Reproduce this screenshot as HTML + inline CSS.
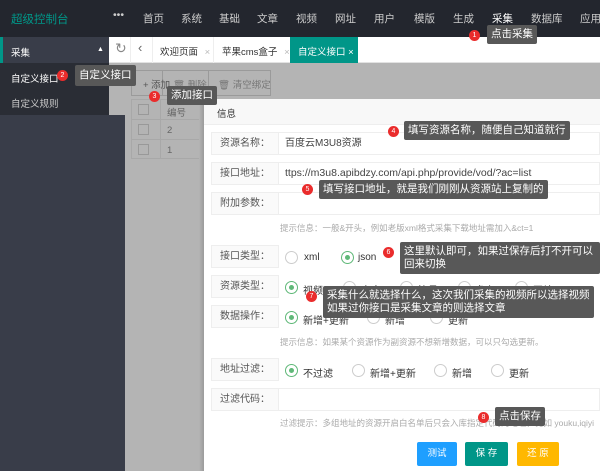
<!DOCTYPE html>
<html><head><meta charset="utf-8"><style>
*{margin:0;padding:0;box-sizing:border-box}
body{width:600px;height:471px;overflow:hidden;position:relative;font-family:"Liberation Sans","Noto Sans CJK SC",sans-serif;font-size:9.5px;color:#333;background:#b4b4b4}
.a{position:absolute;white-space:nowrap}
.top{left:0;top:0;width:600px;height:37px;background:#23262e}
.nav{top:11px;color:#ccc;font-size:10.5px}
.tip{background:#585858;color:#fff;font-size:10.5px;padding:3px 4px;border-radius:2px;line-height:13px}
.b{width:11px;height:11px;border-radius:50%;background:#ea2c2c;color:#fff;font-size:7px;text-align:center;line-height:11px}
.lab{left:211px;width:68px;height:23px;background:#fafafa;border:1px solid #eee;text-align:center;line-height:21px;color:#555;font-size:10px}
.fld{left:279px;width:321px;height:23px;border:1px solid #eee;border-left:none;background:#fff;line-height:21px;padding-left:6px;color:#444;font-size:10px}
.r{width:13px;height:13px;border:1px solid #ccc;border-radius:50%;background:#fff}
.r.on{border-color:#5fb878}
.r.on:after{content:"";position:absolute;left:3px;top:3px;width:5px;height:5px;border-radius:50%;background:#5fb878}
.o{font-size:10px}
.hint{color:#aaa;font-size:8.5px}
.btn{top:442px;height:24px;color:#fff;text-align:center;line-height:24px;font-size:9.5px;border-radius:2px}
</style></head><body>
<div class="a top"></div>
<div class="a" style="left:11px;top:11px;color:#009688;font-size:11.5px">超级控制台</div>
<div class="a nav" style="left:113px;top:9px">•••</div>
<div class="a nav" style="left:143px">首页</div><div class="a nav" style="left:181px">系统</div><div class="a nav" style="left:219px">基础</div><div class="a nav" style="left:257px">文章</div><div class="a nav" style="left:296px">视频</div><div class="a nav" style="left:335px">网址</div><div class="a nav" style="left:374px">用户</div><div class="a nav" style="left:414px">模版</div><div class="a nav" style="left:453px">生成</div><div class="a nav" style="left:492px;color:#fff">采集</div><div class="a nav" style="left:531px">数据库</div><div class="a nav" style="left:580px">应用</div>
<div class="a" style="left:0;top:37px;width:125px;height:434px;background:#393d49"></div>
<div class="a" style="left:0;top:37px;width:109px;height:26px;background:#393d49;border-left:3px solid #009688"></div>
<div class="a" style="left:11px;top:45px;color:#fff;font-size:9.5px">采集</div>
<div class="a" style="left:97px;top:46px;color:#fff;font-size:7px">▲</div>
<div class="a" style="left:0;top:63px;width:109px;height:52px;background:#2a2d35"></div>
<div class="a" style="left:109px;top:63px;width:16px;height:52px;background:#b4b4b4"></div>
<div class="a" style="left:11px;top:71px;color:#fff;font-size:9.5px">自定义接口</div>
<div class="a" style="left:11px;top:96px;color:#ccc;font-size:9.5px">自定义规则</div>
<div class="a" style="left:109px;top:37px;width:491px;height:26px;background:#fff;border-bottom:1px solid #e2e2e2"></div>
<div class="a" style="left:115px;top:40px;font-size:14px;color:#888">↻</div>
<div class="a" style="left:130px;top:37px;width:1px;height:26px;background:#eee"></div>
<div class="a" style="left:138px;top:40px;font-size:13px;color:#666">‹</div>
<div class="a" style="left:152px;top:37px;width:1px;height:26px;background:#eee"></div>
<div class="a" style="left:160px;top:44px">欢迎页面 <span style="color:#bbb;margin-left:4px">×</span></div>
<div class="a" style="left:213px;top:37px;width:1px;height:26px;background:#eee"></div>
<div class="a" style="left:222px;top:44px">苹果cms盒子 <span style="color:#bbb;margin-left:4px">×</span></div>
<div class="a" style="left:290px;top:37px;width:68px;height:26px;background:#009688;color:#fff;padding:7px 0 0 8px">自定义接口 ×</div>
<!-- toolbar -->
<div class="a" style="left:131px;top:70px;width:140px;height:26px;border:1px solid #9a9a9a"></div>
<div class="a" style="left:162px;top:70px;width:1px;height:26px;background:#9a9a9a"></div>
<div class="a" style="left:208px;top:70px;width:1px;height:26px;background:#9a9a9a"></div>
<div class="a" style="left:143px;top:77px;color:#555">+ 添加</div>
<div class="a" style="left:173px;top:77px;color:#777">🗑 删除</div>
<div class="a" style="left:218px;top:77px;color:#777">🗑 清空绑定</div>
<div class="a" style="left:131px;top:99px;width:74px;height:60px;border:1px solid #a8a8a8"></div>
<div class="a" style="left:131px;top:119px;width:74px;height:1px;background:#a8a8a8"></div>
<div class="a" style="left:131px;top:139px;width:74px;height:1px;background:#a8a8a8"></div>
<div class="a" style="left:160px;top:99px;width:1px;height:60px;background:#a8a8a8"></div>
<div class="a" style="left:138px;top:104px;width:11px;height:11px;border:1px solid #999"></div>
<div class="a" style="left:138px;top:124px;width:11px;height:11px;border:1px solid #999"></div>
<div class="a" style="left:138px;top:144px;width:11px;height:11px;border:1px solid #999"></div>
<div class="a" style="left:167px;top:105px;color:#666">编号</div>
<div class="a" style="left:167px;top:125px;color:#666">2</div>
<div class="a" style="left:167px;top:145px;color:#666">1</div>
<!-- dialog -->
<div class="a" style="left:199px;top:99px;width:6px;height:372px;background:linear-gradient(to right,#b4b4b4,#969696)"></div>
<div class="a" style="left:204px;top:99px;width:396px;height:372px;background:#fff"></div>
<div class="a" style="left:204px;top:99px;width:396px;height:26px;background:#f8f8f8;border-bottom:1px solid #eee;padding:7px 0 0 13px">信息</div>
<div class="a lab" style="top:132px">资源名称：</div><div class="a fld" style="top:132px">百度云M3U8资源</div>
<div class="a lab" style="top:162px">接口地址：</div><div class="a fld" style="top:162px;font-size:10.5px">ttps://m3u8.apibdzy.com/api.php/provide/vod/?ac=list</div>
<div class="a lab" style="top:192px">附加参数：</div><div class="a fld" style="top:192px"></div>
<div class="a hint" style="left:280px;top:222px">提示信息：一般&amp;开头，例如老版xml格式采集下载地址需加入&amp;ct=1</div>
<div class="a lab" style="top:245px">接口类型：</div>
<div class="a r" style="left:285px;top:251px"></div><div class="a o" style="left:304px;top:252px">xml</div>
<div class="a r on" style="left:341px;top:251px"></div><div class="a o" style="left:358px;top:252px">json</div>
<div class="a lab" style="top:275px">资源类型：</div>
<div class="a r on" style="left:285px;top:281px"></div><div class="a o" style="left:303px;top:282px">视频</div>
<div class="a r" style="left:343px;top:281px"></div><div class="a o" style="left:361px;top:282px">文章</div>
<div class="a r" style="left:400px;top:281px"></div><div class="a o" style="left:418px;top:282px">演员</div>
<div class="a r" style="left:458px;top:281px"></div><div class="a o" style="left:476px;top:282px">角色</div>
<div class="a r" style="left:515px;top:281px"></div><div class="a o" style="left:533px;top:282px">网站</div>
<div class="a lab" style="top:305px">数据操作：</div>
<div class="a r on" style="left:285px;top:311px"></div><div class="a o" style="left:303px;top:312px">新增+更新</div>
<div class="a r" style="left:367px;top:311px"></div><div class="a o" style="left:385px;top:312px">新增</div>
<div class="a r" style="left:430px;top:311px"></div><div class="a o" style="left:448px;top:312px">更新</div>
<div class="a hint" style="left:280px;top:336px">提示信息：如果某个资源作为副资源不想新增数据，可以只勾选更新。</div>
<div class="a lab" style="top:358px">地址过滤：</div>
<div class="a r on" style="left:285px;top:364px"></div><div class="a o" style="left:303px;top:365px">不过滤</div>
<div class="a r" style="left:352px;top:364px"></div><div class="a o" style="left:370px;top:365px">新增+更新</div>
<div class="a r" style="left:434px;top:364px"></div><div class="a o" style="left:452px;top:365px">新增</div>
<div class="a r" style="left:491px;top:364px"></div><div class="a o" style="left:509px;top:365px">更新</div>
<div class="a lab" style="top:388px">过滤代码：</div><div class="a fld" style="top:388px"></div>
<div class="a hint" style="left:280px;top:417px">过滤提示：多组地址的资源开启白名单后只会入库指定代码的地址，比如 youku,iqiyi</div>
<div class="a btn" style="left:417px;width:40px;background:#1e9fff">测试</div>
<div class="a btn" style="left:465px;width:43px;background:#009688">保 存</div>
<div class="a btn" style="left:517px;width:42px;background:#ffb800">还 原</div>
<!-- annotations -->
<div class="a b" style="left:469px;top:30px">1</div><div class="a tip" style="left:487px;top:25px">点击采集</div>
<div class="a b" style="left:57px;top:70px">2</div><div class="a tip" style="left:75px;top:65px;padding:4px 4px">自定义接口</div>
<div class="a b" style="left:149px;top:91px">3</div><div class="a tip" style="left:167px;top:86px">添加接口</div>
<div class="a b" style="left:388px;top:126px">4</div><div class="a tip" style="left:404px;top:121px">填写资源名称，随便自己知道就行</div>
<div class="a b" style="left:302px;top:184px">5</div><div class="a tip" style="left:319px;top:180px">填写接口地址，就是我们刚刚从资源站上复制的</div>
<div class="a b" style="left:383px;top:247px">6</div><div class="a tip" style="left:400px;top:242px;width:200px;white-space:normal">这里默认即可，如果过保存后打不开可以回来切换</div>
<div class="a b" style="left:306px;top:291px">7</div><div class="a tip" style="left:323px;top:286px">采集什么就选择什么，这次我们采集的视频所以选择视频<br>如果过你接口是采集文章的则选择文章</div>
<div class="a b" style="left:478px;top:412px">8</div><div class="a tip" style="left:495px;top:407px">点击保存</div>
</body></html>
